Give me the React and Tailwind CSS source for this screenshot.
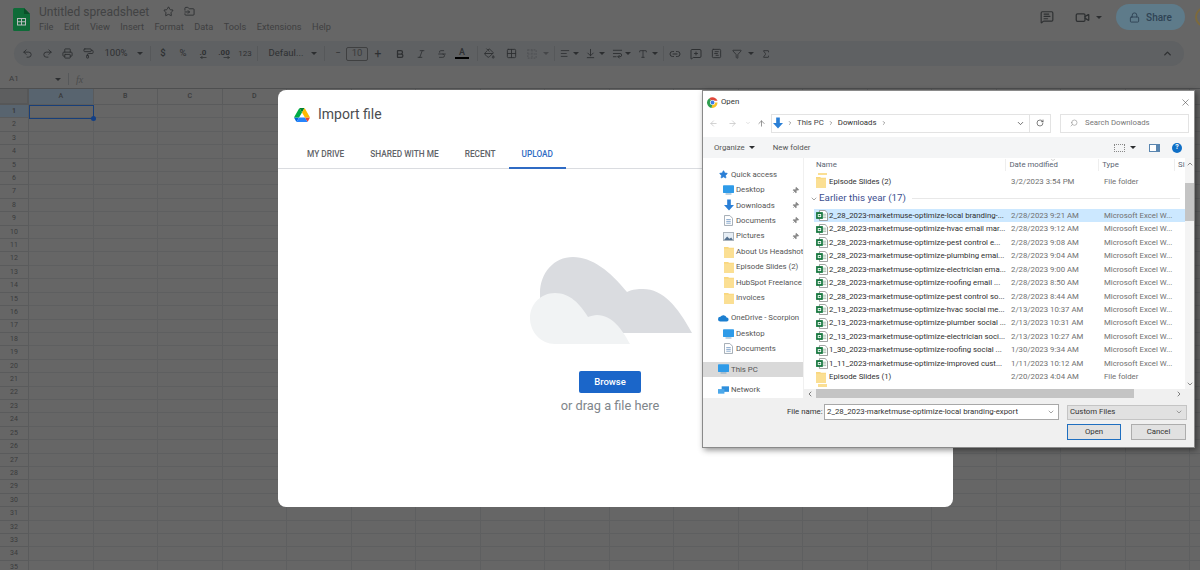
import {
  Undo2, Redo2, Printer, PaintRoller, Bold, Italic, Strikethrough, PaintBucket, Grid2x2,
  AlignLeft, ArrowDownToLine, WrapText, Type, Link2, MessageSquarePlus, SquareChartGantt, Funnel, Sigma,
  ChevronUp, ChevronDown, ChevronLeft, ChevronRight, Star, FolderInput, MessageSquareText, Video, Lock,
  ArrowLeft, ArrowRight, ArrowUp, RotateCw, Search, X, Pin,
} from "lucide-react";

const menus = ["File", "Edit", "View", "Insert", "Format", "Data", "Tools", "Extensions", "Help"];
// last column runs off the window, so it has no label
const columns = ["A", "B", "C", "D", "E", "F", "G", "H", "I", "J", "K", "L", "M", "N", "O", "P", "Q", "R", ""];
const rows = Array.from({ length: 35 }, (_, i) => i + 1);

const files = [
  ["2_28_2023-marketmuse-optimize-local branding-...", "2/28/2023 9:21 AM"],
  ["2_28_2023-marketmuse-optimize-hvac email mar...", "2/28/2023 9:12 AM"],
  ["2_28_2023-marketmuse-optimize-pest control e...", "2/28/2023 9:08 AM"],
  ["2_28_2023-marketmuse-optimize-plumbing emai...", "2/28/2023 9:04 AM"],
  ["2_28_2023-marketmuse-optimize-electrician ema...", "2/28/2023 9:00 AM"],
  ["2_28_2023-marketmuse-optimize-roofing email ...", "2/28/2023 8:50 AM"],
  ["2_28_2023-marketmuse-optimize-pest control so...", "2/28/2023 8:44 AM"],
  ["2_13_2023-marketmuse-optimize-hvac social me...", "2/13/2023 10:37 AM"],
  ["2_13_2023-marketmuse-optimize-plumber social ...", "2/13/2023 10:31 AM"],
  ["2_13_2023-marketmuse-optimize-electrician soci...", "2/13/2023 10:27 AM"],
  ["1_30_2023-marketmuse-optimize-roofing social ...", "1/30/2023 9:34 AM"],
  ["1_11_2023-marketmuse-optimize-improved cust...", "1/11/2023 10:12 AM"],
];

const Caret = ({ className = "" }) => (
  <span className={`inline-block w-0 h-0 border-x-[3px] border-x-transparent border-t-[3px] border-t-[#2c2e30] ${className}`} />
);

const Sep = () => <span className="w-px h-[15px] bg-[#56585a] mx-[5px] shrink-0" />;

// one toolbar button
const Tool = ({ children, className = "w-[21px]" }) => (
  <span className={`flex items-center justify-center shrink-0 text-[#2e3032] ${className}`}>{children}</span>
);

const DriveLogo = () => (
  <svg viewBox="0 0 87.3 78" className="w-4 h-[14px]">
    <path d="m6.6 66.85 3.85 6.65c.8 1.4 1.95 2.5 3.3 3.3l13.75-23.8h-27.5c0 1.55.4 3.1 1.2 4.5z" fill="#0066da" />
    <path d="m43.65 25-13.75-23.8c-1.35.8-2.5 1.9-3.3 3.3l-25.4 44a9.06 9.06 0 0 0 -1.2 4.5h27.5z" fill="#00ac47" />
    <path d="m73.55 76.8c1.35-.8 2.5-1.9 3.3-3.3l1.6-2.75 7.65-13.25c.8-1.4 1.2-2.95 1.2-4.5h-27.502l5.852 11.5z" fill="#ea4335" />
    <path d="m43.65 25 13.75-23.8c-1.35-.8-2.9-1.2-4.5-1.2h-18.5c-1.6 0-3.15.45-4.5 1.2z" fill="#00832d" />
    <path d="m59.8 53h-32.3l-13.75 23.8c1.35.8 2.9 1.2 4.5 1.2h50.8c1.6 0 3.15-.45 4.5-1.2z" fill="#2684fc" />
    <path d="m73.4 26.5-12.7-22c-.8-1.4-1.95-2.5-3.3-3.3l-13.75 23.8 16.15 28h27.45c0-1.55-.4-3.1-1.2-4.5z" fill="#ffba00" />
  </svg>
);

const SheetsLogo = () => (
  <svg viewBox="0 0 17 23" className="w-[17px] h-[23px] shrink-0">
    <path d="M1.5 0H11l6 6v15.5a1.5 1.5 0 0 1-1.5 1.5h-14A1.5 1.5 0 0 1 0 21.5v-20A1.5 1.5 0 0 1 1.5 0z" fill="#0f6b38" />
    <path d="M11 0l6 6h-6z" fill="#0a4f29" />
    <path d="M4 10h9v7.5H4zM5 11v2.2h3V11zm4 0v2.2h3V11zm-4 3.2v2.3h3v-2.3zm4 0v2.3h3v-2.3z" fill="#b9bcbd" fillRule="evenodd" />
  </svg>
);

const ChromeLogo = () => (
  <svg viewBox="0 0 24 24" className="w-[11px] h-[11px] shrink-0">
    <path d="M12 12L5 2.500A12 12 0 0 1 23 8H12z" fill="#e0463a" />
    <path d="M12 12H23A12 12 0 0 1 10 24z" fill="#f7c325" />
    <path d="M12 12L10 24A12 12 0 0 1 5 2.500z" fill="#2f9e4f" />
    <circle cx="12" cy="12" r="5.500" fill="#fff" />
    <circle cx="12" cy="12" r="4.200" fill="#3b7de8" />
  </svg>
);

const MergeIcon = () => (
  <svg viewBox="0 0 12 12" className="w-[10px] h-[10px]" fill="none" stroke="#44464a" strokeWidth="1.400" strokeDasharray="2 1.500">
    <rect x="1" y="1" width="10" height="10" />
    <path d="M1 6h10M6 1v10" />
  </svg>
);

const DecimalIcon = ({ label, reverse }) => (
  <span className="flex flex-col items-center leading-[7px] text-[8px] font-bold">
    {label}
    <svg viewBox="0 0 8 4" className={`w-[7px] h-[3px] ${reverse ? "-scale-x-100 self-end" : "self-end"}`}>
      <path d="M0 2h8M5 0l3 2-3 2" stroke="#2e3032" fill="none" />
    </svg>
  </span>
);

const Folder = () => (
  <svg viewBox="0 0 12 14" className="w-[10px] h-[12px] shrink-0">
    <path d="M0 1h5l1 1h6v12H0z" fill="#f9d77e" />
    <path d="M0 3h12v11H0z" fill="#fbdf93" />
  </svg>
);

const ExcelFile = () => (
  <svg viewBox="0 0 14 13" className="w-[12px] h-[11px] shrink-0">
    <path d="M4 .5h6.500l3 3v9H4z" fill="#fff" stroke="#8d8d8d" />
    <path d="M8 5h4M8 7h4M8 9h4" stroke="#9ab7a4" />
    <rect x="0" y="2.500" width="8" height="8" fill="#17773f" />
    <path d="M2 4.800h4v3.600H2z" fill="#fff" />
    <path d="M3 5.800h2v1.600H3z" fill="#17773f" />
  </svg>
);

const Monitor = () => (
  <svg viewBox="0 0 13 11" className="w-[11px] h-[10px] shrink-0">
    <rect x="0" y="0" width="13" height="9" rx="0.500" fill="#2f9be8" />
    <rect x="3" y="9.600" width="7" height="1.200" fill="#7fa6c4" />
  </svg>
);

const DownloadIcon = () => (
  <svg viewBox="0 0 11 12" className="w-[10px] h-[12px] shrink-0">
    <path d="M3.500 0h4v6H11l-5.500 6L0 6h3.500z" fill="#2a7fd6" />
  </svg>
);

const DocIcon = () => (
  <svg viewBox="0 0 10 12" className="w-[9px] h-[11px] shrink-0">
    <path d="M.5.5h6l3 3v8h-9z" fill="#fff" stroke="#9aa3ad" />
    <path d="M2.500 5h5M2.500 7h5M2.500 9h5" stroke="#7ea1c8" />
  </svg>
);

const PicIcon = () => (
  <svg viewBox="0 0 12 10" className="w-[11px] h-[9px] shrink-0">
    <rect x=".5" y=".5" width="11" height="9" fill="#e7eef5" stroke="#a4adb6" />
    <path d="M1 9l3.500-4 2.500 2.500L9 6l2 3z" fill="#54718f" />
  </svg>
);

const SidebarRow = ({ icon, label, pin, indent = true, active }) => (
  <div className={`h-[15.4px] flex items-center gap-[2px] shrink-0 ${indent ? "pl-[20px]" : "pl-[15px]"} ${active ? "bg-[#d9d9d9]" : ""}`}>
    <span className="w-[11px] flex justify-center shrink-0">{icon}</span>
    <span className="flex-1 whitespace-nowrap">{label}</span>
    {pin && <Pin size={7} className="mr-[4px] text-[#888] fill-[#888] rotate-45" />}
  </div>
);

const FileRow = ({ icon, name, date, type, selected }) => (
  <div className={`h-[13.45px] flex items-center shrink-0 ${selected ? "bg-[#cce8ff]" : ""}`}>
    <span className="w-[15px] pl-[2px] flex shrink-0">{icon}</span>
    <span className="w-[182px] shrink-0 whitespace-nowrap text-[#2f2f2f]">{name}</span>
    <span className="w-[93px] shrink-0 text-[#6f6f6f] whitespace-nowrap">{date}</span>
    <span className="text-[#6f6f6f] whitespace-nowrap">{type}</span>
  </div>
);

const OpenDialog = () => (
  <div className="absolute left-[702px] top-[90px] w-[493px] h-[358px] bg-white border border-[#8a8a8a] shadow-[2px_2px_6px_rgba(0,0,0,0.45)] flex flex-col text-[7.8px] text-[#444] font-['Roboto',sans-serif]">
    {/* title bar */}
    <div className="h-[22px] flex items-center pl-[4px] pr-[3px] shrink-0">
      <ChromeLogo />
      <span className="ml-[3px] text-[#333]">Open</span>
      <X size={11} strokeWidth={1.2} className="ml-auto text-[#444]" />
    </div>

    {/* address row */}
    <div className="h-[20px] flex items-center shrink-0">
      <div className="w-[68px] flex items-center pl-[6px] text-[#c4c4c4]">
        <ArrowLeft size={9} />
        <ArrowRight size={9} className="ml-[10px]" />
        <ChevronDown size={6} className="ml-[8px]" />
        <ArrowUp size={9} className="ml-[6px] text-[#777]" />
      </div>
      <div className="w-[259px] h-[19px] border border-[#e3e3e3] flex items-center pl-[1px] pr-[4px] gap-[4px]">
        <DownloadIcon />
        <ChevronRight size={6} />
        <span>This PC</span>
        <ChevronRight size={6} />
        <span className="text-[#333]">Downloads</span>
        <ChevronRight size={6} />
        <ChevronDown size={9} className="ml-auto" />
      </div>
      <div className="w-[21px] h-[19px] border border-l-0 border-[#e3e3e3] flex items-center justify-center">
        <RotateCw size={8} />
      </div>
      <div className="ml-[9px] w-[129px] h-[19px] border border-[#e3e3e3] flex items-center pl-[9px] gap-[7px] text-[#777]">
        <Search size={8} className="-scale-x-100 text-[#999]" />
        <span>Search Downloads</span>
      </div>
    </div>

    {/* command bar */}
    <div className="mt-[4px] h-[21px] bg-[#f4f5f6] flex items-center pl-[11px] shrink-0 text-[#555]">
      <span>Organize</span>
      <Caret className="ml-[4px]" />
      <span className="ml-[18px]">New folder</span>
      <span className="ml-auto flex items-center w-[80px]">
        <span className="w-[11px] h-[8px] border border-dotted border-[#888]" />
        <Caret className="ml-[5px]" />
        <span className="ml-[13px] w-[11px] h-[8px] border border-[#5a86b0] border-r-[4px] bg-white" />
        <span className="ml-[12px] w-[10px] h-[10px] rounded-full bg-[#0f6fc6] text-white text-[7px] font-bold flex items-center justify-center">?</span>
      </span>
    </div>

    {/* sidebar and list */}
    <div className="flex-1 flex min-h-0">
      <div className="w-[101px] shrink-0 flex flex-col border-r border-[#f0f0f0] pt-[9px] text-[#555] overflow-hidden">
        <SidebarRow indent={false} icon={<Star size={9} className="text-[#2a7fd6] fill-[#2a7fd6]" />} label="Quick access" />
        <SidebarRow icon={<Monitor />} label="Desktop" pin />
        <SidebarRow icon={<DownloadIcon />} label="Downloads" pin />
        <SidebarRow icon={<DocIcon />} label="Documents" pin />
        <SidebarRow icon={<PicIcon />} label="Pictures" pin />
        <SidebarRow icon={<Folder />} label="About Us Headshot" />
        <SidebarRow icon={<Folder />} label="Episode Slides (2)" />
        <SidebarRow icon={<Folder />} label="HubSpot Freelance" />
        <SidebarRow icon={<Folder />} label="Invoices" />
        <div className="h-[5px] shrink-0" />
        <SidebarRow indent={false} icon={<svg viewBox="0 0 14 9" className="w-[11px] h-[8px]"><path d="M3 9a3 3 0 0 1 0-6 4.500 4.500 0 0 1 8 1 2.500 2.500 0 0 1 0 5z" fill="#1c7fd0" /></svg>} label="OneDrive - Scorpion" />
        <SidebarRow icon={<Monitor />} label="Desktop" />
        <SidebarRow icon={<DocIcon />} label="Documents" />
        <div className="h-[5px] shrink-0" />
        <SidebarRow indent={false} active icon={<Monitor />} label="This PC" />
        <div className="h-[5px] shrink-0" />
        <SidebarRow indent={false} icon={<svg viewBox="0 0 12 10" className="w-[11px] h-[10px]"><rect x="4" y="1" width="8" height="6" fill="#2f8fdc" /><rect x="0" y="4" width="7" height="5" fill="#4ba8ea" /></svg>} label="Network" />
      </div>

      <div className="flex-1 min-w-0 flex flex-col">
        <div className="flex-1 min-h-0 flex">
          <div className="flex-1 min-w-0 pl-[10px] flex flex-col overflow-hidden">
            <div className="relative h-[14px] flex items-center shrink-0 text-[#5a6472]">
              <span className="w-[193px] pl-[2px] border-r border-[#eee]">Name</span>
              <span className="w-[93px] pl-[3px] border-r border-[#eee]">Date modified</span>
              <span className="w-[76px] pl-[3px] border-r border-[#eee]">Type</span>
              <span className="pl-[3px] w-[10px] overflow-hidden">Si</span>
              <ChevronDown size={6} className="absolute left-[236px] -top-[1px] text-[#999]" />
            </div>
            <div className="h-[3px] pt-[1px] pl-[4px] shrink-0"><div className="w-[9px] h-[2px] bg-[#fbdf93]" /></div>
            <FileRow icon={<Folder />} name="Episode Slides (2)" date="3/2/2023 3:54 PM" type="File folder" />
            <div className="h-[20.6px] -ml-[4px] pr-[5px] flex items-center shrink-0 text-[#3d4f8f] text-[9.8px]">
              <ChevronDown size={8} className="mr-[1px] text-[#777]" />
              <span>Earlier this year (17)</span>
              <span className="ml-[6px] flex-1 h-px bg-[#e8e8e8]" />
            </div>
            {files.map(([name, date], i) => (
              <FileRow key={name} icon={<ExcelFile />} name={name} date={date} type="Microsoft Excel W..." selected={i === 0} />
            ))}
            <FileRow icon={<Folder />} name="Episode Slides (1)" date="2/20/2023 4:04 AM" type="File folder" />
            <div className="pl-[4px] shrink-0"><div className="w-[9px] h-[3px] bg-[#fbdf93]" /></div>
          </div>
          <div className="w-[9px] shrink-0 flex flex-col items-center bg-[#f4f4f4] text-[#555]">
            <ChevronUp size={8} className="mt-[2px]" />
            <div className="mt-[15px] w-full h-[38px] bg-[#c4c4c4]" />
            <ChevronDown size={8} className="mt-auto mb-[1px]" />
          </div>
        </div>
        <div className="h-[9px] shrink-0 flex items-center bg-[#f0f0f0] text-[#444]">
          <ChevronLeft size={8} className="ml-[2px] shrink-0" />
          <div className="ml-[2px] w-[318px] h-[9px] shrink-0 bg-[#c4c4c4]" />
          <ChevronRight size={8} className="ml-auto mr-[11px] shrink-0" />
        </div>
      </div>
    </div>

    {/* file name and buttons */}
    <div className="h-[49px] shrink-0 bg-[#f0f0f0] flex flex-col pt-[6px] pl-[84px] text-[#333]">
      <div className="flex items-center h-[16px]">
        <span className="w-[37px] whitespace-nowrap">File name:</span>
        <div className="w-[235px] h-[16px] bg-white border border-[#a8a8a8] flex items-center pl-[2px] pr-[3px]">
          <span className="whitespace-nowrap">2_28_2023-marketmuse-optimize-local branding-export</span>
          <ChevronDown size={8} className="ml-auto text-[#777]" />
        </div>
        <div className="ml-[8px] w-[120px] h-[15px] bg-[#e1e1e1] border border-[#c4c4c4] flex items-center pl-[2px] pr-[3px]">
          <span>Custom Files</span>
          <ChevronDown size={8} className="ml-auto text-[#777]" />
        </div>
      </div>
      <div className="flex mt-[4px] pl-[280px] gap-[10px]">
        <span className="w-[54px] h-[16px] bg-[#e1e1e1] border border-[#1f6fc0] flex items-center justify-center">Open</span>
        <span className="w-[55px] h-[16px] bg-[#e1e1e1] border border-[#adadad] flex items-center justify-center">Cancel</span>
      </div>
    </div>
  </div>
);

const ImportDialog = () => (
  <div className="absolute left-[278px] top-[90px] w-[675px] h-[417px] bg-white rounded-lg flex flex-col font-['Roboto',sans-serif]">
    <div className="h-[49px] pl-[16px] flex items-center gap-[8px] shrink-0">
      <DriveLogo />
      <span className="text-[14px] text-[#4a4d50]">Import file</span>
    </div>
    <div className="h-[30px] flex items-start border-b border-[#dadce0] pl-[16px] text-[8.3px] font-medium shrink-0 text-[#5f6368]">
      <span className="px-[13px] pt-[9px]">MY DRIVE</span>
      <span className="px-[13px] pt-[9px]">SHARED WITH ME</span>
      <span className="px-[13px] pt-[9px]">RECENT</span>
      <span className="px-[13px] pt-[9px] h-[30px] text-[#2f6bc4] border-b-2 border-[#2f6bc4]">UPLOAD</span>
    </div>
    <div className="flex-1 flex flex-col items-start pt-[88px] pl-[252px]">
      <svg viewBox="0 0 162 88" className="w-[162px] h-[88px] shrink-0">
        <path d="M10 76V36C10 16 24 0 43 0C62 0 80 14 97 35C103 32 108 32 113 32C133 32 148 50 162 76Z" fill="#dadce0" />
        <path d="M25 87C11 87 0 75 0 61C0 47 11 36 25 36C40 36 50 47 58 60C61 59 64 58 67 58C82 58 92 72 100 87Z" fill="#f1f3f4" />
      </svg>
      <div className="mt-[26px] -ml-[41px] w-[242px] flex flex-col items-center">
        <span className="w-[62px] h-[22px] rounded-[2px] bg-[#1b66c9] text-white text-[9.5px] font-medium flex items-center justify-center">Browse</span>
        <span className="mt-[4px] text-[12.8px] leading-[17px] text-[#80868b]">or drag a file here</span>
      </div>
    </div>
  </div>
);

export default function App() {
  return (
    <div className="relative w-[1200px] h-[570px] overflow-hidden bg-[#666666] font-['Roboto',sans-serif] text-[#3a3b3c]">
      {/* sheets header */}
      <div className="h-[41px] flex pl-[13px] pt-[8px]">
        <SheetsLogo />
        <div className="ml-[9px] -mt-[6px] flex flex-col">
          <div className="flex items-center h-[19px]">
            <span className="text-[12px] text-[#424344]">Untitled spreadsheet</span>
            <Star size={11} className="ml-[14px] text-[#2e3032]" />
            <FolderInput size={11} className="ml-[10px] text-[#2e3032]" />
          </div>
          <div className="flex gap-[10.5px] -mt-px text-[9.2px] leading-[13px] text-[#3f4041]">
            {menus.map((m) => <span key={m}>{m}</span>)}
          </div>
        </div>
        <div className="ml-auto -mt-[4px] flex items-center h-[26px] text-[#2e3032]">
          <MessageSquareText size={14} />
          <Video size={15} className="ml-[21px]" />
          <Caret className="ml-[6px]" />
          <div className="ml-[14px] w-[69px] h-[26px] rounded-[13px] bg-[#5e7b8a] flex items-center justify-center gap-[6px] text-[#2f4354] text-[10px] font-medium">
            <Lock size={11} />
            <span>Share</span>
          </div>
          <span className="ml-[10px] -mr-[21px] w-[26px] h-[20px] rounded-full border-2 border-[#7d6a3c] shrink-0" />
        </div>
      </div>

      {/* toolbar */}
      <div className="mx-[14px] w-[1170px] h-[25px] rounded-[13px] bg-[#5f6163] flex items-center pl-[3px] text-[9.5px] text-[#3a3b3c]">
        <Tool className="w-[20px]"><Undo2 size={11} /></Tool>
        <Tool className="w-[20px]"><Redo2 size={11} /></Tool>
        <Tool><Printer size={11} /></Tool>
        <Tool className="w-[20px]"><PaintRoller size={11} /></Tool>
        <Tool className="w-[36px]">100%</Tool>
        <Tool className="w-[11px]"><Caret /></Tool>
        <Sep />
        <Tool className="w-[14px] font-medium">$</Tool>
        <Tool className="w-[26px]">%</Tool>
        <Tool className="w-[14px]"><DecimalIcon label=".0" reverse /></Tool>
        <Tool className="w-[28px]"><DecimalIcon label=".00" /></Tool>
        <Tool className="w-[14px] text-[8px]">123</Tool>
        <Sep />
        <Tool className="w-[46px]">Defaul...</Tool>
        <Tool className="w-[10px]"><Caret /></Tool>
        <Sep />
        <Tool className="w-[16px]">−</Tool>
        <span className="w-[22px] h-[14px] border border-[#3f4041] rounded-[2px] flex items-center justify-center shrink-0">10</span>
        <Tool className="w-[20px] text-[12px]">+</Tool>
        <Tool className="w-[20px] ml-[2px]"><Bold size={10} strokeWidth={3} /></Tool>
        <Tool><Italic size={10} /></Tool>
        <Tool><Strikethrough size={10} /></Tool>
        <Tool className="w-[20px]">
          <span className="flex flex-col items-center leading-[9px] text-[9px] font-medium">A<span className="w-[14px] h-[2px] bg-black" /></span>
        </Tool>
        <Sep />
        <Tool className="w-[12px]"><PaintBucket size={11} /></Tool>
        <Tool className="w-[32px]"><Grid2x2 size={11} /></Tool>
        <Tool className="w-[10px] opacity-50"><MergeIcon /></Tool>
        <Tool className="w-[6px] ml-[6px] opacity-50"><Caret /></Tool>
        <Sep />
        <Tool className="w-[10px]"><AlignLeft size={11} /></Tool>
        <Tool className="w-[12px]"><Caret /></Tool>
        <Tool className="w-[17px]"><ArrowDownToLine size={11} /></Tool>
        <Tool className="w-[6px]"><Caret /></Tool>
        <Tool className="w-[12px] ml-[6px]"><WrapText size={11} /></Tool>
        <Tool className="w-[6px] ml-[2px]"><Caret /></Tool>
        <Tool className="w-[12px] ml-[6px]"><Type size={10} /></Tool>
        <Tool className="w-[6px] ml-[3px]"><Caret /></Tool>
        <Sep />
        <Tool className="w-[12px]"><Link2 size={12} /></Tool>
        <Tool className="w-[20px] ml-[5px]"><MessageSquarePlus size={12} /></Tool>
        <Tool className="w-[20px]"><SquareChartGantt size={11} /></Tool>
        <Tool className="w-[22px]"><Funnel size={10} /></Tool>
        <Tool className="w-[6px]"><Caret /></Tool>
        <Tool className="w-[24px]"><Sigma size={10} /></Tool>
        <Tool className="w-[14px] ml-auto mr-[10px]"><ChevronUp size={11} strokeWidth={3} /></Tool>
      </div>

      {/* formula bar */}
      <div className="mt-[4px] h-[18px] flex items-center pl-[9px] text-[8px] border-b border-[#4e4f50] box-content">
        <span className="w-[46px]">A1</span>
        <Caret />
        <span className="ml-[7px] w-px h-[12px] bg-[#56585a]" />
        <span className="ml-[7px] italic font-['Liberation_Serif',serif] text-[10px] text-[#4a4b4c]">fx</span>
      </div>

      {/* grid */}
      <div className="relative grid grid-cols-[29px_repeat(19,64.500px)] grid-rows-[16px_repeat(35,13.420px)] text-[7px] text-[#3a3b3c]">
        <div className="bg-[#5d5e5f] border-r-[2px] border-b-[2px] border-[#565758]" />
        {columns.map((c) => (
          <div key={c} className={`flex items-center justify-center border-r border-b border-[#5a5b5c] font-medium ${c === "A" ? "bg-[#58646f]" : ""}`}>{c}</div>
        ))}
        {rows.map((r) => (
          <div key={r} className="contents">
            <div className={`flex items-center justify-center border-r border-b border-[#5a5b5c] ${r === 1 ? "bg-[#58646f] font-bold" : ""}`}>{r}</div>
            {columns.map((c) => (
              <div key={c} className="border-r border-b border-[#5e5f60]" />
            ))}
          </div>
        ))}
        {/* selected cell */}
        <div className="absolute left-[29px] top-[16px] w-[65px] h-[14px] border border-[#173f7a]">
          <span className="absolute -right-[3px] -bottom-[3px] w-[5px] h-[5px] rounded-full bg-[#123f86]" />
        </div>
      </div>

      <ImportDialog />
      <OpenDialog />
    </div>
  );
}
